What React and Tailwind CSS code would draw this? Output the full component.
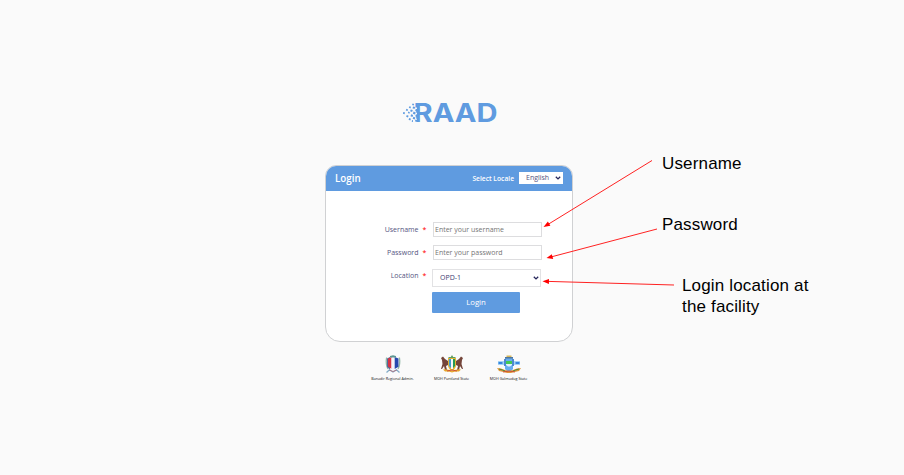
import React from 'react';

const DOTS = [
  [0.4, 9.4, 1.8], [3.4, 6.2, 1.8], [3.8, 12.4, 1.9], [5.4, 9, 1.6], [6.4, 3.6, 1.7], [6.2, 15.4, 1.9],
  [7.8, 6.8, 2.1], [8.2, 11.6, 2.1], [9.6, 0.8, 1.7], [9.2, 17.4, 1.7],
];
const EDGE_DOTS = [
  [10.2, 3.8, 2.1], [10.6, 9, 2.3], [10.4, 14.2, 2.1],
  [12.9, 6.2, 2.3], [13, 11.6, 2.3], [12.6, 16.8, 2.1],
];

function Dots({ items }) {
  return items.map(([x, y, s]) => (
    <rect key={`${x}-${y}`} x={x} y={y + 0.6} width={s} height={s} transform={`rotate(20 ${x} ${y + 0.6})`} />
  ));
}

function Logo() {
  return (
    <svg className="block h-[36px] w-[100px]" viewBox="0 -7 100 36" fill="#5f9be0" role="img" aria-label="RAAD">
      <Dots items={DOTS} />
      <text x="10.600" y="19.500" fontFamily="Inter, sans-serif" fontWeight="700" fontSize="25" textLength="84" lengthAdjust="spacingAndGlyphs">RAAD</text>
      <path d="M10 5.500h4v2.200h-.8v3h.8v3h-.8v3h.8V21h-4z" fill="#fafafa" />
      <Dots items={EDGE_DOTS} />
    </svg>
  );
}

function Chevron({ className }) {
  return (
    <svg className={className} viewBox="0 0 6 4" fill="none" stroke="#26265a" strokeWidth="1.3">
      <path d="M0.8 0.7 3 2.9 5.2 0.7" />
    </svg>
  );
}

function Row({ label, className, children }) {
  return (
    <div className={`flex ${className}`}>
      <div className="flex w-[101px] shrink-0 justify-end text-[7px] leading-[10px] text-[#55557f]">
        <span>{label}</span>
        <span className="ml-[4px] mr-px w-[3.5px] font-semibold text-[#ff3030]">*</span>
      </div>
      {children}
    </div>
  );
}

function BanadirEmblem() {
  return (
    <svg className="h-[19px] w-[18px]" viewBox="0 0 18 19">
      <path d="M2.600 2.500Q1.500 9 4 14M15.400 2.500Q16.500 9 14 14" fill="none" stroke="#8fb7a4" strokeWidth="1.300" />
      <path d="M3 3.500 6 2v12.500L3 12z" fill="#526b9e" />
      <path d="M4 3.500 7.500 2v12L4 11.500z" fill="#d73545" />
      <path d="M7.500 3h3.200v11L9 15l-1.500-1z" fill="#f5f6fb" />
      <path d="M10.700 2 14.500 3.500v8.200L10.700 14z" fill="#2749ae" />
      <path d="m6 1 3-.8L12 1v1.600H6z" fill="#5c9692" />
      <path d="m2.500 17.500 3-2.700L9 17l3.500-2.200 3 2.700" fill="none" stroke="#83adc8" strokeWidth="1.300" />
      <path d="m5.500 15.200 3.500 1.300 3.500-1.300" fill="none" stroke="#b66d78" strokeWidth=".8" />
    </svg>
  );
}

function PuntlandEmblem() {
  return (
    <svg className="h-[19px] w-[24px]" viewBox="0 0 24 19">
      <path d="m1 3 2-1.500L5 4l3 2v4l-2 1 1 4H5l-1-4-2 3H1l1.500-5L2 5zM23 3l-2-1.500L19 4l-3 2v4l2 1-1 4h2l1-4 2 3h1l-1.500-5L22 5z" fill="#74453a" />
      <path d="M8 3h8v8q-1 4-4 5-3-1-4-5z" fill="#e5b638" />
      <path d="M9 4h2v9l-2-2z" fill="#3f9bd3" />
      <path d="M11 4h2v10h-2z" fill="#f8f8f5" />
      <path d="M13 4h2v7l-2 2z" fill="#249a54" />
      <path d="m12 0 1.200 2H16l-1 1H9L8 2h2.800z" fill="#5d9d61" />
      <path d="M3 14.500q4-1 9 1.800 5-2.800 9-1.800l-2 2q-4-.5-7 1-3-1.500-7-1z" fill="#e5a52c" />
      <path d="M7 16q5-2 10 0" fill="none" stroke="#ce5332" />
    </svg>
  );
}

function GalmudugEmblem() {
  return (
    <svg className="h-[19px] w-[26px]" viewBox="0 0 26 19">
      <path d="M2 6h6v4H2zM18 6h6v4h-6z" fill="#a4d4f7" />
      <path d="M2.500 8h4M19.500 8h4" stroke="#3685df" strokeWidth="2" />
      <path d="M9 3h8v11q-1 2-4 3-3-1-4-3z" fill="#67aef0" />
      <path d="M8 4h2v7H8zM16 4h2v7h-2z" fill="#4e89cf" />
      <path d="M10 6h6v3h-6z" fill="#42ca54" />
      <path d="M10 9h6v1l-2 1.500h-2L10 10z" fill="#dff2ff" />
      <path d="M9 2h8v1.500H9z" fill="#50759c" />
      <path d="M10.500.5h5V2h-5z" fill="#d5b75b" />
      <path d="M1 13q4 0 8 2l4 1 4-1q4-2 8-2l-2 3q-5 1-8 2h-4q-3-1-8-2z" fill="#e09638" />
      <path d="M3 14q4 1 6 2M23 14q-4 1-6 2" fill="none" stroke="#4d8a42" />
      <path d="M7 17q6-2 12 0" fill="none" stroke="#c94b30" strokeWidth=".9" />
    </svg>
  );
}

const PARTNERS = [
  { name: 'Banadir Regional Admin.', Emblem: BanadirEmblem },
  { name: 'MOH Puntland State', Emblem: PuntlandEmblem },
  { name: 'MOH Galmudug State', Emblem: GalmudugEmblem },
];

const ARROWS = [
  { from: [652, 160.5], to: [549, 223.8], head: '543.5,227 547.9,221.5 550.4,225.8' },
  { from: [657, 229], to: [552, 256.7], head: '546.5,258 551.8,254.2 553.2,259' },
  { from: [674, 285], to: [548, 281.4], head: '542.5,281.2 549,278.9 548.9,283.9' },
];

export default function App() {
  return (
    <div className="relative h-[475px] w-[904px] overflow-hidden bg-[#fafafa] font-['Open_Sans',sans-serif]">
      <main className="ml-[325px] flex w-[248px] flex-col pt-[95px]">
        <div className="ml-[78px]"><Logo /></div>

        <form className="mt-[34px] h-[177px] overflow-hidden rounded-t-[11px] rounded-b-[15px] border border-[#d0d1d3] bg-white" onSubmit={(e) => e.preventDefault()}>
          <header className="-mx-px -mt-px flex h-[26px] items-center bg-[#5f9be0] pl-[10px] pr-[10px] text-white">
            <h1 className="mt-px text-[9.8px] font-semibold leading-[14px]">Login</h1>
            <span className="ml-auto mt-px text-[6.7px] font-semibold leading-[10px]">Select Locale</span>
            <button type="button" className="ml-[5px] flex h-[12px] w-[44px] items-center justify-between bg-white pl-[7px] pr-[2px] text-[7px] leading-[10px] text-[#55557f]">
              English
              <Chevron className="h-[4px] w-[6px]" />
            </button>
          </header>

          <Row label="Username" className="mt-[31px] h-[23px] [&>div:first-child]:pt-[3px]">
            <input aria-label="Username" placeholder="Enter your username" className="ml-[6px] h-[15px] w-[109px] border border-[#dddddf] bg-white px-px pb-px text-[7px] leading-[10px] outline-none placeholder:text-[#757575]" />
          </Row>
          <Row label="Password" className="h-[23px] [&>div:first-child]:pt-[3px]">
            <input aria-label="Password" placeholder="Enter your password" className="ml-[6px] h-[15px] w-[109px] border border-[#dddddf] bg-white px-px pb-px text-[7px] leading-[10px] outline-none placeholder:text-[#757575]" />
          </Row>
          <Row label="Location" className="mt-px h-[23px] [&>div:first-child]:pt-[2px]">
            <button type="button" className="ml-[5px] flex h-[18px] w-[109px] items-center justify-between border border-[#e2e2e4] bg-white pb-px pl-[7px] pr-px text-[7px] leading-[10px] text-[#3c3c70]">
              OPD-1
              <Chevron className="h-[4px] w-[6px]" />
            </button>
          </Row>
          <button type="submit" className="ml-[106px] block h-[21px] w-[88px] rounded-[1px] bg-[#5f9be0] pb-px text-[7.8px] leading-[20px] text-white">Login</button>
        </form>

        <footer className="ml-[37px] mt-[13px] flex">
          {PARTNERS.map(({ name, Emblem }) => (
            <div key={name} className="flex w-[57px] flex-col items-center first:w-[61px]">
              <Emblem />
              <span className="mt-[2px] whitespace-nowrap text-[3.7px] leading-[6px] text-[#111]">{name}</span>
            </div>
          ))}
        </footer>
      </main>

      <svg className="pointer-events-none absolute inset-0 h-[475px] w-[904px]" viewBox="0 0 904 475" fill="#f00">
        {ARROWS.map(({ from, to, head }) => (
          <g key={head}>
            <line x1={from[0]} y1={from[1]} x2={to[0]} y2={to[1]} stroke="#f22" strokeWidth="1" />
            <polygon points={head} />
          </g>
        ))}
      </svg>
      <p className="absolute left-[662px] top-[153px] font-['Liberation_Sans',sans-serif] text-[17px] leading-[21px] tracking-[0.16px] text-black">Username</p>
      <p className="absolute left-[662px] top-[214px] font-['Liberation_Sans',sans-serif] text-[17px] leading-[21px] tracking-[0.16px] text-black">Password</p>
      <p className="absolute left-[682px] top-[275px] font-['Liberation_Sans',sans-serif] text-[17px] leading-[21px] tracking-[0.16px] text-black">Login location at<br />the facility</p>
    </div>
  );
}
